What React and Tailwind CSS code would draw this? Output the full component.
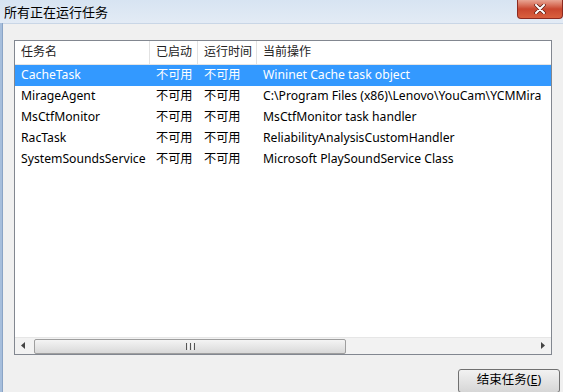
const FONT = { fontFamily: '"Noto Sans", "Noto Sans CJK SC", sans-serif' };

const COLS = [
  { label: "任务名", w: "w-[135px] shrink-0" },
  { label: "已启动", w: "w-[48px] shrink-0" },
  { label: "运行时间", w: "w-[59px] shrink-0" },
  { label: "当前操作", w: "flex-1" },
];

const ROWS = [
  ["CacheTask", "不可用", "不可用", "Wininet Cache task object"],
  ["MirageAgent", "不可用", "不可用", "C:\\Program Files (x86)\\Lenovo\\YouCam\\YCMMira"],
  ["MsCtfMonitor", "不可用", "不可用", "MsCtfMonitor task handler"],
  ["RacTask", "不可用", "不可用", "ReliabilityAnalysisCustomHandler"],
  ["SystemSoundsService", "不可用", "不可用", "Microsoft PlaySoundService Class"],
];

function CloseButton() {
  return (
    <div className="ml-auto self-start w-[46px] h-[19px] rounded-b-[4px] border border-t-0 border-[#8c2a20] bg-gradient-to-b from-[#e8a493] via-[#c9462f] to-[#d9603f] flex items-center justify-center">
      <svg width="12" height="10" viewBox="0 0 12 10">
        <path d="M2 1 L10 9 M10 1 L2 9" stroke="#5a1a10" strokeWidth="3.4" strokeLinecap="round" />
        <path d="M2 1 L10 9 M10 1 L2 9" stroke="#ffffff" strokeWidth="2" strokeLinecap="round" />
      </svg>
    </div>
  );
}

function ScrollBar() {
  return (
    <div className="h-[17px] flex bg-[#f2f2f2] border-t border-[#e6e6e6]">
      <div className="w-[17px] flex items-center justify-center">
        <svg width="5" height="7" viewBox="0 0 5 7"><path d="M4 0 L0 3.5 L4 7 Z" fill="#444" /></svg>
      </div>
      <div className="ml-[2px] w-[312px] h-[15px] mt-[1px] rounded-[2px] border border-[#9e9e9e] bg-gradient-to-b from-[#f4f4f4] to-[#d9d9d9] flex items-center justify-center">
        <div className="flex gap-[1px]">
          <div className="w-[1px] h-[7px] bg-[#555]" />
          <div className="w-[1px] h-[7px] bg-[#f4f4f4]" />
          <div className="w-[1px] h-[7px] bg-[#555]" />
          <div className="w-[1px] h-[7px] bg-[#f4f4f4]" />
          <div className="w-[1px] h-[7px] bg-[#555]" />
        </div>
      </div>
      <div className="flex-1" />
      <div className="w-[17px] flex items-center justify-center">
        <svg width="5" height="7" viewBox="0 0 5 7"><path d="M1 0 L5 3.5 L1 7 Z" fill="#444" /></svg>
      </div>
    </div>
  );
}

export default function App() {
  return (
    <div className="w-[563px] h-[392px] overflow-hidden flex flex-col bg-[#f0f0f0] text-[12px] text-black" style={FONT}>
      <div className="h-[25px] flex bg-gradient-to-b from-[#d7e4f2] to-[#e3ebf5]">
        <div className="pl-[4px] pt-[3px] text-[13px] text-black">所有正在运行任务</div>
        <CloseButton />
      </div>
      <div className="flex-1 flex">
        <div className="w-[3px] bg-[#a6bedc] border-r border-[#8aa4c6]" />
        <div className="flex-1 flex flex-col border-t border-[#c9d6e6] pt-[16px] pl-[11px]">
          <div className="w-[538px] h-[315px] border border-[#828790] bg-white flex flex-col">
            <div className="h-[24px] shrink-0 flex border-b border-[#e5e5e5] text-[#222]">
              {COLS.map((c, i) => (
                <div key={c.label} className={`${c.w} flex items-center pl-[6px] whitespace-nowrap ${i < 3 ? "border-r border-[#e2e2e2]" : ""}`}>
                  {c.label}
                </div>
              ))}
            </div>
            {ROWS.map((r, ri) => (
              <div key={r[0]} className={`h-[21px] shrink-0 flex items-center whitespace-nowrap overflow-hidden text-[12.2px] ${ri === 0 ? "bg-[#3399ff] text-white" : ""}`}>
                <div className="w-[135px] shrink-0 pl-[6px]">{r[0]}</div>
                <div className="w-[48px] shrink-0 pl-[6px]">{r[1]}</div>
                <div className="w-[59px] shrink-0 pl-[6px]">{r[2]}</div>
                <div className="flex-1 pl-[6px]">{r[3]}</div>
              </div>
            ))}
            <div className="flex-1" />
            <ScrollBar />
          </div>
          <div className="flex justify-end pr-[3px] pt-[14px]">
            <div className="w-[102px] h-[24px] rounded-[3px] border border-[#707070] bg-gradient-to-b from-[#f2f2f2] to-[#d6d6d6] flex items-center justify-center text-[12.5px]">
              结束任务(<span className="underline">E</span>)
            </div>
          </div>
        </div>
      </div>
    </div>
  );
}
